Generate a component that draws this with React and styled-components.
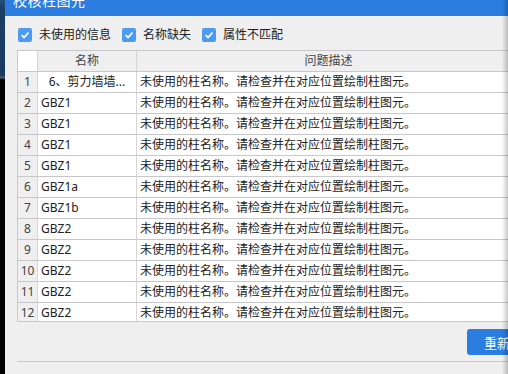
import React from "react";
import styled, { createGlobalStyle } from "styled-components";

const GlobalStyle = createGlobalStyle`
  html, body {
    margin: 0;
    padding: 0;
    background: #000;
    overflow: hidden;
  }
  body {
    font-family: "Noto Sans", "Noto Sans CJK SC", sans-serif;
    font-size: 12px;
    color: #222;
  }
`;

// whole window: desktop sliver on the left, dialog on the right
const Screen = styled.div`
  display: flex;
  height: 374px;
  width: 508px;
  overflow: hidden;
  position: relative;
`;

const DesktopStrip = styled.div`
  flex: 0 0 5px;
  background: linear-gradient(
    to bottom,
    #24507e 0,
    #1b3f66 8px,
    #1a3a5e 76px,
    #5a6a7a 77px,
    #000 80px,
    #000 100%
  );
`;

const Dialog = styled.div`
  flex: 0 0 560px;
  display: flex;
  flex-direction: column;
  background: #efefef;
`;

const TitleBar = styled.div`
  height: 16px;
  background: #2b7de0;
  color: #fff;
  font-size: 14px;
  line-height: 14px;
  padding-left: 8px;
  overflow: hidden;
`;

const TitleText = styled.div`
  margin-top: -6px;
  letter-spacing: 0.5px;
`;

const Body = styled.div`
  flex: 1;
  display: flex;
  flex-direction: column;
  padding: 12px 12px 0 12px;
`;

const FilterRow = styled.div`
  display: flex;
  align-items: center;
  height: 14px;
  padding-left: 1px;
  gap: 11px;
`;

const CheckItem = styled.label`
  display: flex;
  align-items: center;
  gap: 7px;
  font-size: 12px;
  line-height: 14px;
  color: #222;
`;

const Box = styled.span`
  width: 14px;
  height: 14px;
  border-radius: 2px;
  background: #4c9bef;
  display: flex;
  align-items: center;
  justify-content: center;
`;

const Grid = styled.div`
  margin-top: 8px;
  height: 270px;
  border: 1px solid #c8c8cc;
  border-right: none;
  overflow: hidden;
  background: #fff;
`;

const Row = styled.div`
  display: grid;
  grid-template-columns: 20px 99px 384px 1fr;
  height: 20px;
  border-bottom: 1px solid #c8c8cc;
  background: ${({ $header }) => ($header ? "#efefef" : "#fff")};
`;

const Cell = styled.div`
  display: flex;
  align-items: center;
  justify-content: ${({ $align }) => $align || "flex-start"};
  padding-left: ${({ $pad }) => $pad ?? 3}px;
  border-right: 1px solid #d6d6d6;
  background: ${({ $bg }) => $bg || "transparent"};
  color: ${({ $muted }) => ($muted ? "#444" : "#222")};
  white-space: nowrap;
  overflow: hidden;
  line-height: 20px;
`;

const Footer = styled.div`
  display: flex;
  justify-content: flex-end;
  margin-top: 7px;
`;

const Button = styled.button`
  height: 26px;
  padding: 0 17px;
  border: none;
  border-radius: 3px;
  background: #2b7de0;
  color: #fff;
  font-family: inherit;
  font-size: 13px;
`;

const Divider = styled.div`
  margin-top: 6px;
  height: 1px;
  background: #c8c8cc;
`;

const EdgeShadow = styled.div`
  position: absolute;
  top: 0;
  right: 0;
  bottom: 0;
  width: 6px;
  background: linear-gradient(to right, rgba(0, 0, 0, 0), rgba(0, 0, 0, 0.22));
  pointer-events: none;
`;

const Check = () => (
  <Box>
    <svg width="10" height="10" viewBox="0 0 10 10">
      <path d="M1.6 5.2 L4 7.5 L8.5 2.6" fill="none" stroke="#fff" strokeWidth="1.6" />
    </svg>
  </Box>
);

const MSG = "未使用的柱名称。请检查并在对应位置绘制柱图元。";

const rows = [
  { name: "6、剪力墙墙...", center: true },
  { name: "GBZ1" },
  { name: "GBZ1" },
  { name: "GBZ1" },
  { name: "GBZ1" },
  { name: "GBZ1a" },
  { name: "GBZ1b" },
  { name: "GBZ2" },
  { name: "GBZ2" },
  { name: "GBZ2" },
  { name: "GBZ2" },
  { name: "GBZ2" },
];

export default function App() {
  return (
    <>
      <GlobalStyle />
      <Screen>
        <DesktopStrip />
        <Dialog>
          <TitleBar>
            <TitleText>校核柱图元</TitleText>
          </TitleBar>
          <Body>
            <FilterRow>
              <CheckItem>
                <Check />
                未使用的信息
              </CheckItem>
              <CheckItem>
                <Check />
                名称缺失
              </CheckItem>
              <CheckItem>
                <Check />
                属性不匹配
              </CheckItem>
            </FilterRow>

            <Grid>
              <Row $header>
                <Cell $bg="#fff" />
                <Cell $align="center" $pad={0} $muted>名称</Cell>
                <Cell $align="center" $pad={0} $muted>问题描述</Cell>
                <Cell />
              </Row>
              {rows.map((r, i) => (
                <Row key={i}>
                  <Cell $align="center" $pad={0} $bg="#efefef" $muted>
                    {i + 1}
                  </Cell>
                  <Cell $align={r.center ? "center" : "flex-start"} $pad={r.center ? 0 : 3}>
                    {r.name}
                  </Cell>
                  <Cell>{MSG}</Cell>
                  <Cell />
                </Row>
              ))}
            </Grid>

            <Footer>
              <Button>重新检查</Button>
            </Footer>
            <Divider />
          </Body>
        </Dialog>
        <EdgeShadow />
      </Screen>
    </>
  );
}
